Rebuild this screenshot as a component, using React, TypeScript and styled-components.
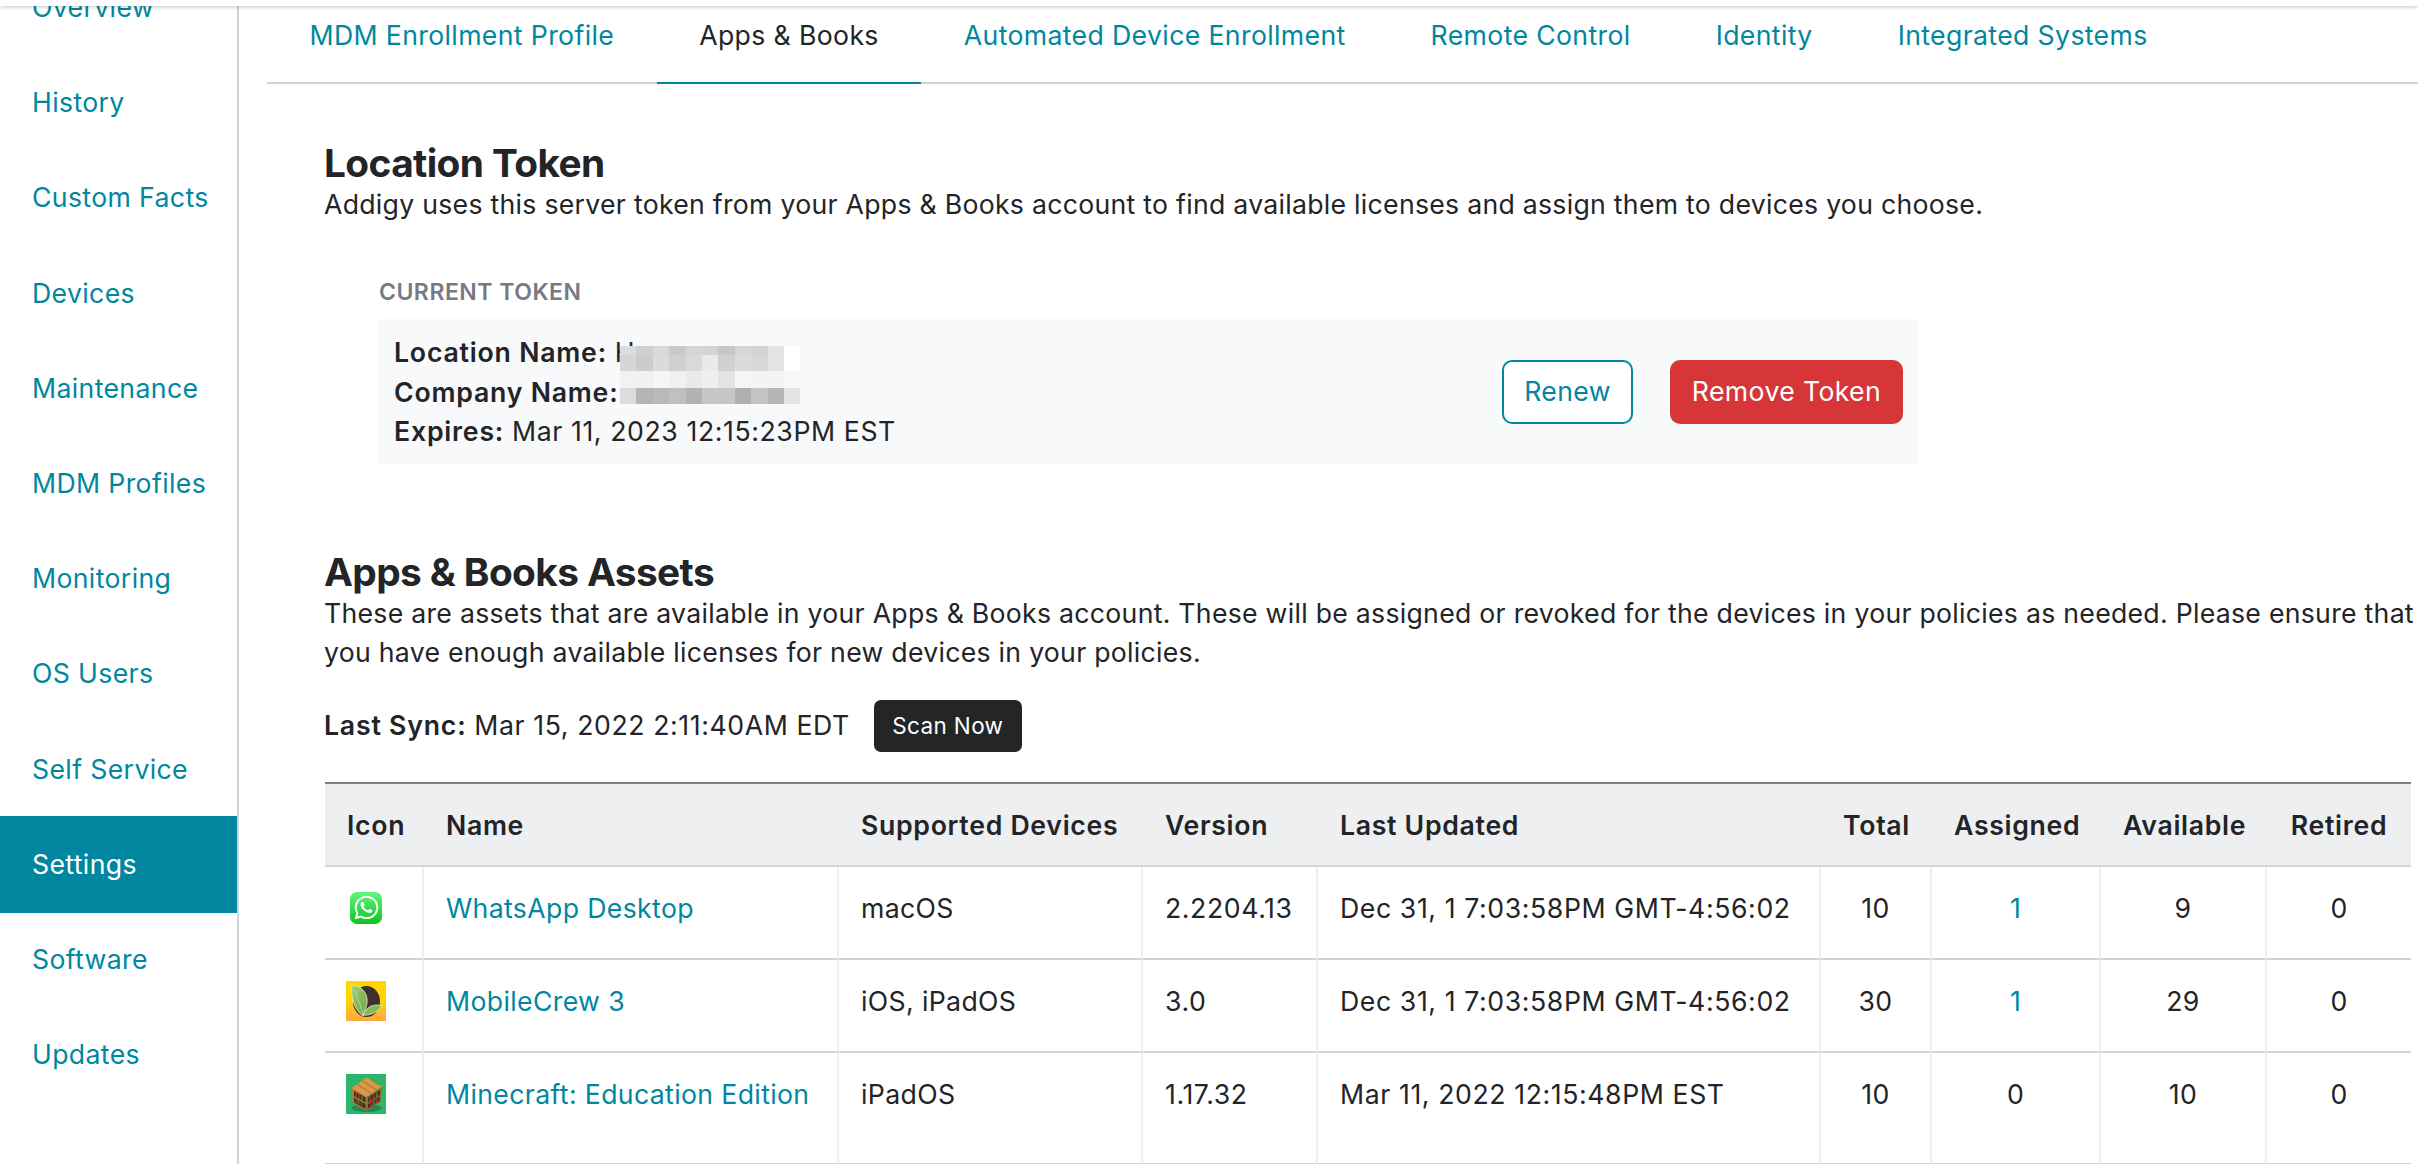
import React from "react";
import styled, { createGlobalStyle } from "styled-components";
import { FaWhatsapp } from "react-icons/fa";

const Global = createGlobalStyle`
  html, body { margin: 0; padding: 0; background: #fff; overflow: hidden; }
  body { font-family: Inter, "Noto Sans", "Liberation Sans", sans-serif; color: #232427; }
  * { box-sizing: border-box; }
`;

const TEAL = "#00879f";
const LINE = "#d2d2da";
const SOFT = "#eeeef0";

const Page = styled.div`
  width: 2418px;
  height: 1164px;
  display: flex;
  flex-direction: column;
  overflow: hidden;
  font-size: 26.65px;
  letter-spacing: 0.36px;
  line-height: 39.5px;
`;
const TopBar = styled.header`
  flex: 0 0 6px;
  background: #fff;
  box-shadow: 0 1px 4px rgba(0, 0, 0, 0.22);
  position: relative;
  z-index: 2;
`;
const Body = styled.div`
  flex: 1;
  min-height: 0;
  display: flex;
`;
const Sidebar = styled.nav`
  flex: 0 0 239px;
  border-right: 2px solid ${LINE};
  overflow: hidden;
`;
const NavList = styled.div`
  margin-top: -46px;
  display: flex;
  flex-direction: column;
`;
const NavItem = styled.a<{ $active?: boolean }>`
  height: ${(p) => (p.$active ? "97.2px" : "95.2px")};
  margin: ${(p) => (p.$active ? "-1px 0" : "0")};
  padding-left: 32px;
  padding-top: 0.5px;
  display: flex;
  align-items: center;
  color: ${(p) => (p.$active ? "#fff" : TEAL)};
  background: ${(p) => (p.$active ? TEAL : "transparent")};
`;
const Main = styled.main`
  flex: 1;
  min-width: 0;
  display: flex;
  flex-direction: column;
  overflow: hidden;
`;
const Tabs = styled.div`
  margin-left: 28px;
  height: 78px;
  display: flex;
  border-bottom: 2px solid ${LINE};
`;
const Tab = styled.a<{ $active?: boolean }>`
  height: 78px;
  padding: 10px 42.5px 0;
  color: ${(p) => (p.$active ? "#232427" : TEAL)};
  border-bottom: 2px solid ${(p) => (p.$active ? TEAL : "transparent")};
`;
const Content = styled.div`
  padding: 0 0 0 85px;
`;
const Heading = styled.h2<{ $top: number }>`
  margin: ${(p) => p.$top}px 0 0;
  font-size: 38.8px;
  line-height: 44px;
  font-weight: 700;
  letter-spacing: -0.6px;
  color: #232427;
`;
const Text = styled.p`
  margin: 0;
  letter-spacing: 0.28px;
`;
const Strong = styled.b`
  font-weight: 600;
  letter-spacing: 0.8px;
`;
const Stamp = styled.span`
  letter-spacing: 0.6px;
`;
const Caption = styled.div`
  margin: 52px 0 12px 55px;
  font-size: 23px;
  line-height: 30px;
  font-weight: 600;
  color: #767a85;
  letter-spacing: 0.5px;
`;
const TokenPanel = styled.section`
  position: relative;
  margin-left: 55px;
  width: 1538px;
  height: 145px;
  padding: 14.5px 14px 0 15px;
  background: #f8f9fb;
  display: flex;
  justify-content: space-between;
`;
const Facts = styled.div`
  display: flex;
  flex-direction: column;
`;
const Mosaic = styled.div`
  position: absolute;
  left: 241px;
  top: 27px;
  display: grid;
  grid-template-columns: repeat(11, 16.4px);
  grid-template-rows: 9px 16px 17px 16px;
`;
const Tile = styled.i<{ $c: string }>`
  background: ${(p) => p.$c};
`;
const Actions = styled.div`
  display: flex;
  gap: 37px;
  margin-top: 26.5px;
  height: 64px;
`;
const OutlineButton = styled.button`
  width: 131px;
  height: 64px;
  border: 2px solid ${TEAL};
  border-radius: 10px;
  background: #fff;
  color: ${TEAL};
  font: inherit;
  letter-spacing: inherit;
  padding: 0;
`;
const DangerButton = styled.button`
  width: 233px;
  height: 64px;
  border: 0;
  border-radius: 10px;
  background: #d63638;
  color: #fff;
  font: inherit;
  letter-spacing: inherit;
  padding: 0;
`;
const SyncRow = styled.div`
  margin-top: 27px;
  display: flex;
  align-items: center;
  gap: 24px;
  height: 52px;
`;
const SyncText = styled.span`
  padding-top: 1px;
`;
const DarkButton = styled.button`
  width: 148px;
  height: 52px;
  border: 0;
  border-radius: 7px;
  background: #242527;
  color: #fff;
  font: inherit;
  font-size: 22.5px;
  letter-spacing: inherit;
  padding: 0;
`;
const Table = styled.table`
  margin: 30px 0 0 1px;
  width: 2086px;
  table-layout: fixed;
  border-collapse: separate;
  border-spacing: 0;
`;
const Col = styled.col<{ $w: number }>`
  width: ${(p) => p.$w}px;
`;
const Th = styled.th<{ $center?: boolean }>`
  height: 85px;
  padding: 3px 22px 0;
  background: #eeeff1;
  border-top: 2px solid #7b7d87;
  border-bottom: 2px solid ${LINE};
  font-weight: 600;
  letter-spacing: 0.7px;
  text-align: ${(p) => (p.$center ? "center" : "left")};
  white-space: nowrap;
`;
const Row = styled.tr<{ $tall?: boolean }>`
  height: ${(p) => (p.$tall ? 112 : 93)}px;
`;
const Td = styled.td<{ $center?: boolean }>`
  padding: 22.5px 22px 0;
  vertical-align: top;
  border-bottom: 2px solid ${LINE};
  border-right: 2px solid ${SOFT};
  text-align: ${(p) => (p.$center ? "center" : "left")};
  white-space: nowrap;
  &:last-child { border-right: 0; }
`;
const IconTd = styled(Td)`
  padding: 21px 0 0 21px;
`;
const TableLink = styled.a`
  color: ${TEAL};
`;
const IconBox = styled.div`
  width: 40px;
  height: 40px;
  display: flex;
  align-items: center;
  justify-content: center;
`;
const WhatsTile = styled.div`
  width: 32px;
  height: 32px;
  border-radius: 7px;
  background: linear-gradient(180deg, #62f57e, #0cc41f);
  color: #fff;
  display: flex;
  align-items: center;
  justify-content: center;
`;

const CrewIcon = () => (
  <svg width="40" height="40" viewBox="0 0 40 40" aria-label="MobileCrew">
    <defs>
      <linearGradient id="crewBg" x1="0" y1="0" x2="0" y2="1">
        <stop offset="0.45" stopColor="#ffd600" />
        <stop offset="1" stopColor="#ffa83f" />
      </linearGradient>
      <linearGradient id="crewLeaf" x1="0" y1="0" x2="1" y2="1">
        <stop offset="0" stopColor="#a6cf78" />
        <stop offset="1" stopColor="#6aa544" />
      </linearGradient>
    </defs>
    <rect width="40" height="40" fill="url(#crewBg)" />
    <ellipse cx="20.5" cy="20.5" rx="13.5" ry="15.5" fill="#3e302c" />
    <path d="M6 4 C17 5 24 15 20 26 C19 30 18 33 17 35 C9 30 4 16 6 4 Z" fill="url(#crewLeaf)" stroke="#dfe9d4" strokeWidth="0.9" />
    <path d="M8 8 C12 16 15 26 17 34" fill="none" stroke="#cfe3b8" strokeWidth="0.6" />
    <path d="M17 34 C20 26 28 22 36 25 C32 31 24 35 17 34 Z" fill="#86ba56" stroke="#e6eedd" strokeWidth="0.8" />
  </svg>
);

const MinecraftIcon = () => (
  <svg width="40" height="40" viewBox="0 0 40 40" aria-label="Minecraft">
    <rect width="40" height="40" fill="#2db56c" />
    <ellipse cx="20.5" cy="34" rx="15" ry="4" fill="#1f8a52" />
    <path d="M6 14 L20.7 22.7 L20.7 37 L6.7 29.3 Z" fill="#b57a35" />
    <path d="M35.7 13 L20.7 22.7 L20.7 37 L34.7 27.7 Z" fill="#9c6529" />
    <path d="M8 17 L19.5 23.5 V28.5 L8 22 Z" fill="#3f3328" />
    <path d="M8 23.5 L19.5 30 V35 L8 28.5 Z" fill="#3f3328" />
    <path d="M22 23.5 L34 16 V21 L22 28.5 Z" fill="#3f3328" />
    <path d="M22 30 L33.5 22.6 V27 L22 34.5 Z" fill="#3f3328" />
    <path d="M10 18.5 V23 M13 20 V24.8 M10 24.6 V29 M15.5 27.6 V32 M24 23 V27.5 M28 20.5 V25 M25 28.5 V33 M30.5 25 V29" stroke="#b52d22" strokeWidth="1.6" />
    <path d="M16 22 V26.5 M12.5 26 V30.5 M31 18.5 V23 M28 27 V31" stroke="#3e8a45" strokeWidth="1.4" />
    <path d="M20.7 3.3 L35.7 12.7 L20.7 22.7 L5.7 14.3 Z" fill="#d9984a" />
    <path d="M15.7 6.5 L30.7 16 M10.7 10 L25.7 19.5 M25.7 6.4 L33 11" stroke="#a96f2e" strokeWidth="1" />
  </svg>
);

const navItems = ["Overview", "History", "Custom Facts", "Devices", "Maintenance", "MDM Profiles", "Monitoring", "OS Users", "Self Service", "Settings", "Software", "Updates"];
const tabs = ["MDM Enrollment Profile", "Apps & Books", "Automated Device Enrollment", "Remote Control", "Identity", "Integrated Systems"];
const colWidths = [99, 415, 304, 175, 503, 111, 169, 166, 144];
const mosaic = [
  ["#dcdddf", "#cfd0d2", "#d8d9db", "#c8c9cb", "#d4d5d7", "#d3d4d6", "#c6c7c9", "#d6d7d9", "#d2d3d5", "#e2e3e4", "#ffffff"],
  ["#d5d6d8", "#cbccce", "#dadbdd", "#cfd0d2", "#d8d9db", "#e8eae9", "#cfd0d2", "#dadbdd", "#d6d7d9", "#e4e4e4", "#ffffff"],
  ["#f1f2f3", "#f0f1f2", "#f5f6f6", "#f0f1f1", "#e9eaea", "#eef0ee", "#e2e3e3", "#f4f5f6", "#f3f4f5", "#f3f4f5", "#f6f7f8"],
  ["#dcdcde", "#b3b4b6", "#b8b9bb", "#bfc0c2", "#b2b3b5", "#c6c7c6", "#c4c5c5", "#afb0b2", "#c2c3c5", "#b4b5b7", "#e4e4e5"],
];
const rows = [
  { icon: <WhatsTile><FaWhatsapp size={27} /></WhatsTile>, name: "WhatsApp Desktop", devices: "macOS", version: "2.2204.13", updated: "Dec 31, 1 7:03:58PM GMT-4:56:02", total: 10, assigned: 1, available: 9, retired: 0 },
  { icon: <CrewIcon />, name: "MobileCrew 3", devices: "iOS, iPadOS", version: "3.0", updated: "Dec 31, 1 7:03:58PM GMT-4:56:02", total: 30, assigned: 1, available: 29, retired: 0 },
  { icon: <MinecraftIcon />, name: "Minecraft: Education Edition", devices: "iPadOS", version: "1.17.32", updated: "Mar 11, 2022 12:15:48PM EST", total: 10, assigned: 0, available: 10, retired: 0 },
];

export default function App() {
  return (
    <Page>
      <Global />
      <TopBar />
      <Body>
        <Sidebar>
          <NavList>
            {navItems.map((n) => (
              <NavItem key={n} $active={n === "Settings"}>{n}</NavItem>
            ))}
          </NavList>
        </Sidebar>
        <Main>
          <Tabs>
            {tabs.map((t) => (
              <Tab key={t} $active={t === "Apps & Books"}>{t}</Tab>
            ))}
          </Tabs>
          <Content>
            <Heading $top={57}>Location Token</Heading>
            <Text>Addigy uses this server token from your Apps &amp; Books account to find available licenses and assign them to devices you choose.</Text>
            <Caption>CURRENT TOKEN</Caption>
            <TokenPanel>
              <Facts>
                <div><Strong>Location Name:</Strong> H</div>
                <div><Strong>Company Name:</Strong></div>
                <div><Strong>Expires:</Strong> <Stamp>Mar 11, 2023 12:15:23PM EST</Stamp></div>
              </Facts>
              <Mosaic>
                {mosaic.flat().map((c, i) => <Tile key={i} $c={c} />)}
              </Mosaic>
              <Actions>
                <OutlineButton>Renew</OutlineButton>
                <DangerButton>Remove Token</DangerButton>
              </Actions>
            </TokenPanel>
            <Heading $top={86}>Apps &amp; Books Assets</Heading>
            <Text>These are assets that are available in your Apps &amp; Books account. These will be assigned or revoked for the devices in your policies as needed. Please ensure that you have enough available licenses for new devices in your policies.</Text>
            <SyncRow>
              <SyncText><Strong>Last Sync:</Strong> <Stamp>Mar 15, 2022 2:11:40AM EDT</Stamp></SyncText>
              <DarkButton>Scan Now</DarkButton>
            </SyncRow>
            <Table>
              <colgroup>
                {colWidths.map((w, i) => <Col key={i} $w={w} />)}
              </colgroup>
              <thead>
                <tr>
                  <Th>Icon</Th>
                  <Th>Name</Th>
                  <Th>Supported Devices</Th>
                  <Th>Version</Th>
                  <Th>Last Updated</Th>
                  <Th $center>Total</Th>
                  <Th $center>Assigned</Th>
                  <Th $center>Available</Th>
                  <Th $center>Retired</Th>
                </tr>
              </thead>
              <tbody>
                {rows.map((r, i) => (
                  <Row key={r.name} $tall={i === 2}>
                    <IconTd><IconBox>{r.icon}</IconBox></IconTd>
                    <Td><TableLink>{r.name}</TableLink></Td>
                    <Td>{r.devices}</Td>
                    <Td><Stamp>{r.version}</Stamp></Td>
                    <Td><Stamp>{r.updated}</Stamp></Td>
                    <Td $center>{r.total}</Td>
                    <Td $center>{r.assigned > 0 ? <TableLink>{r.assigned}</TableLink> : r.assigned}</Td>
                    <Td $center>{r.available}</Td>
                    <Td $center>{r.retired}</Td>
                  </Row>
                ))}
              </tbody>
            </Table>
          </Content>
        </Main>
      </Body>
    </Page>
  );
}
